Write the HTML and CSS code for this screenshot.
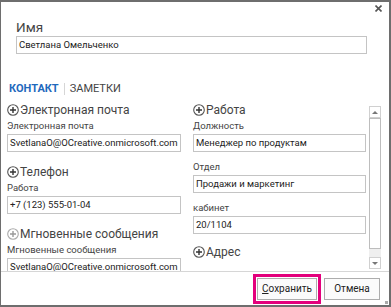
FILE: index.html
```html
<!DOCTYPE html>
<html lang="ru">
<head>
    <meta charset="UTF-8">
    <meta name="viewport" content="width=device-width, initial-scale=1.0">
    <title>Контакт</title>
    <link rel="stylesheet" href="styles.css">
</head>
<body>
    <div class="window">
        <div class="titlebar">
            <svg class="close" width="7" height="7" viewBox="0 0 7 7">
                <path d="M0.5 0.5 L6.5 6.5 M6.5 0.5 L0.5 6.5" stroke="#555" stroke-width="1.6"/>
            </svg>
        </div>

        <div class="name-block">
            <div class="name-label">Имя</div>
            <div class="field name-field">Светлана Омельченко</div>
        </div>

        <div class="tabs">
            <span class="tab active">КОНТАКТ</span>
            <span class="tab-sep"></span>
            <span class="tab">ЗАМЕТКИ</span>
        </div>

        <div class="content">
            <div class="col col-left">
                <div class="section-title">
                    <svg class="plus" width="12" height="12" viewBox="0 0 12 12"><circle cx="6" cy="6" r="5.3" fill="none" stroke="#555" stroke-width="1.1"/><path d="M6 3 V9 M3 6 H9" stroke="#333" stroke-width="1.4"/></svg>Электронная почта
                </div>
                <div class="field-label">Электронная почта</div>
                <div class="field">SvetlanaO@OCreative.onmicrosoft.com</div>

                <div class="section-title gap">
                    <svg class="plus" width="12" height="12" viewBox="0 0 12 12"><circle cx="6" cy="6" r="5.3" fill="none" stroke="#555" stroke-width="1.1"/><path d="M6 3 V9 M3 6 H9" stroke="#333" stroke-width="1.4"/></svg>Телефон
                </div>
                <div class="field-label">Работа</div>
                <div class="field">+7 (123) 555-01-04</div>

                <div class="section-title gap">
                    <svg class="plus" width="12" height="12" viewBox="0 0 12 12"><circle cx="6" cy="6" r="5.3" fill="none" stroke="#aaa" stroke-width="1.1"/><path d="M6 3 V9 M3 6 H9" stroke="#999" stroke-width="1.4"/></svg>Мгновенные сообщения
                </div>
                <div class="field-label">Мгновенные сообщения</div>
                <div class="field">SvetlanaO@OCreative.onmicrosoft.com</div>
            </div>

            <div class="col col-right">
                <div class="section-title">
                    <svg class="plus" width="12" height="12" viewBox="0 0 12 12"><circle cx="6" cy="6" r="5.3" fill="none" stroke="#555" stroke-width="1.1"/><path d="M6 3 V9 M3 6 H9" stroke="#333" stroke-width="1.4"/></svg>Работа
                </div>
                <div class="field-label">Должность</div>
                <div class="field">Менеджер по продуктам</div>

                <div class="field-label small-gap">Отдел</div>
                <div class="field">Продажи и маркетинг</div>

                <div class="field-label small-gap">кабинет</div>
                <div class="field">20/1104</div>

                <div class="section-title addr">
                    <svg class="plus" width="12" height="12" viewBox="0 0 12 12"><circle cx="6" cy="6" r="5.3" fill="none" stroke="#555" stroke-width="1.1"/><path d="M6 3 V9 M3 6 H9" stroke="#333" stroke-width="1.4"/></svg>Адрес
                </div>
            </div>

            <div class="scrollbar">
                <div class="sb-btn"><span class="arrow-up"></span></div>
                <div class="sb-thumb"></div>
                <div class="sb-track"></div>
                <div class="sb-btn"><span class="arrow-down"></span></div>
            </div>
        </div>

        <div class="footer">
            <div class="highlight">
                <button class="btn"><u>С</u>охранить</button>
            </div>
            <button class="btn">Отмена</button>
            <span class="grip"></span>
        </div>
    </div>
</body>
</html>
```

FILE: styles.css
```css
html, body {
    margin: 0;
    padding: 0;
    background-color: white;
}
body {
    font-family: Roboto, "Open Sans", sans-serif;
    color: #444;
}
.window {
    width: 391px;
    height: 307px;
    box-sizing: border-box;
    border-top: 2px solid #6e6e6e;
    border-left: 1px solid #6e6e6e;
    border-right: 2px solid #6e6e6e;
    border-bottom: 2px solid #6e6e6e;
    display: flex;
    flex-direction: column;
    overflow: hidden;
}
.titlebar {
    height: 16px;
    display: flex;
    justify-content: flex-end;
    align-items: flex-start;
    padding-right: 7px;
}
.close {
    margin-top: 3px;
}
.name-block {
    padding-left: 15px;
}
.name-label {
    font-size: 13.5px;
    line-height: 18px;
    color: #444;
}
.field {
    box-sizing: border-box;
    height: 18px;
    border: 1px solid #c4c4c4;
    padding-left: 2px;
    font-size: 9.5px;
    line-height: 16px;
    color: #222;
    white-space: nowrap;
    overflow: hidden;
}
.name-field {
    width: 351px;
}
.tabs {
    margin-top: 28px;
    padding-left: 8px;
    height: 14px;
    display: flex;
    align-items: center;
    font-size: 11px;
    line-height: 14px;
}
.tab {
    color: #444;
}
.tab.active {
    color: #1f69bd;
    font-weight: bold;
}
.tab-sep {
    width: 1px;
    height: 12px;
    background-color: #d6d6d6;
    margin: 0 5px 0 5px;
}
.content {
    flex: 1;
    display: flex;
    padding: 5px 0 0 6px;
    overflow: hidden;
    border-bottom: 1px solid #d6d6d6;
}
.col-left {
    width: 174px;
}
.col-right {
    width: 173px;
    margin-left: 12px;
}
.section-title {
    display: flex;
    align-items: center;
    height: 18px;
    font-size: 12px;
    color: #444;
}
.section-title.gap {
    margin-top: 11px;
}
.section-title.addr {
    margin-top: 9px;
}
.plus {
    margin-right: 1px;
}
.field-label {
    font-size: 9.5px;
    line-height: 13px;
    margin-bottom: 2px;
    color: #444;
}
.field-label.small-gap {
    margin-top: 8px;
}
.scrollbar {
    width: 12px;
    margin: 5px 0 2px 3px;
    display: flex;
    flex-direction: column;
}
.sb-btn {
    height: 12px;
    box-sizing: border-box;
    border: 1px solid #d0d0d0;
    display: flex;
    align-items: center;
    justify-content: center;
}
.arrow-up {
    border-left: 3px solid transparent;
    border-right: 3px solid transparent;
    border-bottom: 3px solid #777;
}
.arrow-down {
    border-left: 3px solid transparent;
    border-right: 3px solid transparent;
    border-top: 3px solid #777;
}
.sb-thumb {
    height: 131px;
    box-sizing: border-box;
    border: 1px solid #bdbdbd;
    background-color: white;
}
.sb-track {
    flex: 1;
    background-color: #efefef;
}
.footer {
    height: 33px;
    display: flex;
    align-items: center;
    justify-content: flex-end;
    padding-right: 9px;
    position: relative;
}
.highlight {
    border: 3px solid #e3007c;
    padding: 1px;
    margin-right: 3px;
    display: flex;
}
.btn {
    box-sizing: border-box;
    height: 22px;
    width: 60px;
    border: 1px solid #adadad;
    background-color: #fbfbfb;
    font-family: Roboto, "Open Sans", sans-serif;
    font-size: 10px;
    color: #222;
    padding: 0;
}
.footer > .btn {
    width: 56px;
}
.grip {
    position: absolute;
    right: 1px;
    bottom: 1px;
    width: 3px;
    height: 3px;
    background-color: #aaa;
}
```
